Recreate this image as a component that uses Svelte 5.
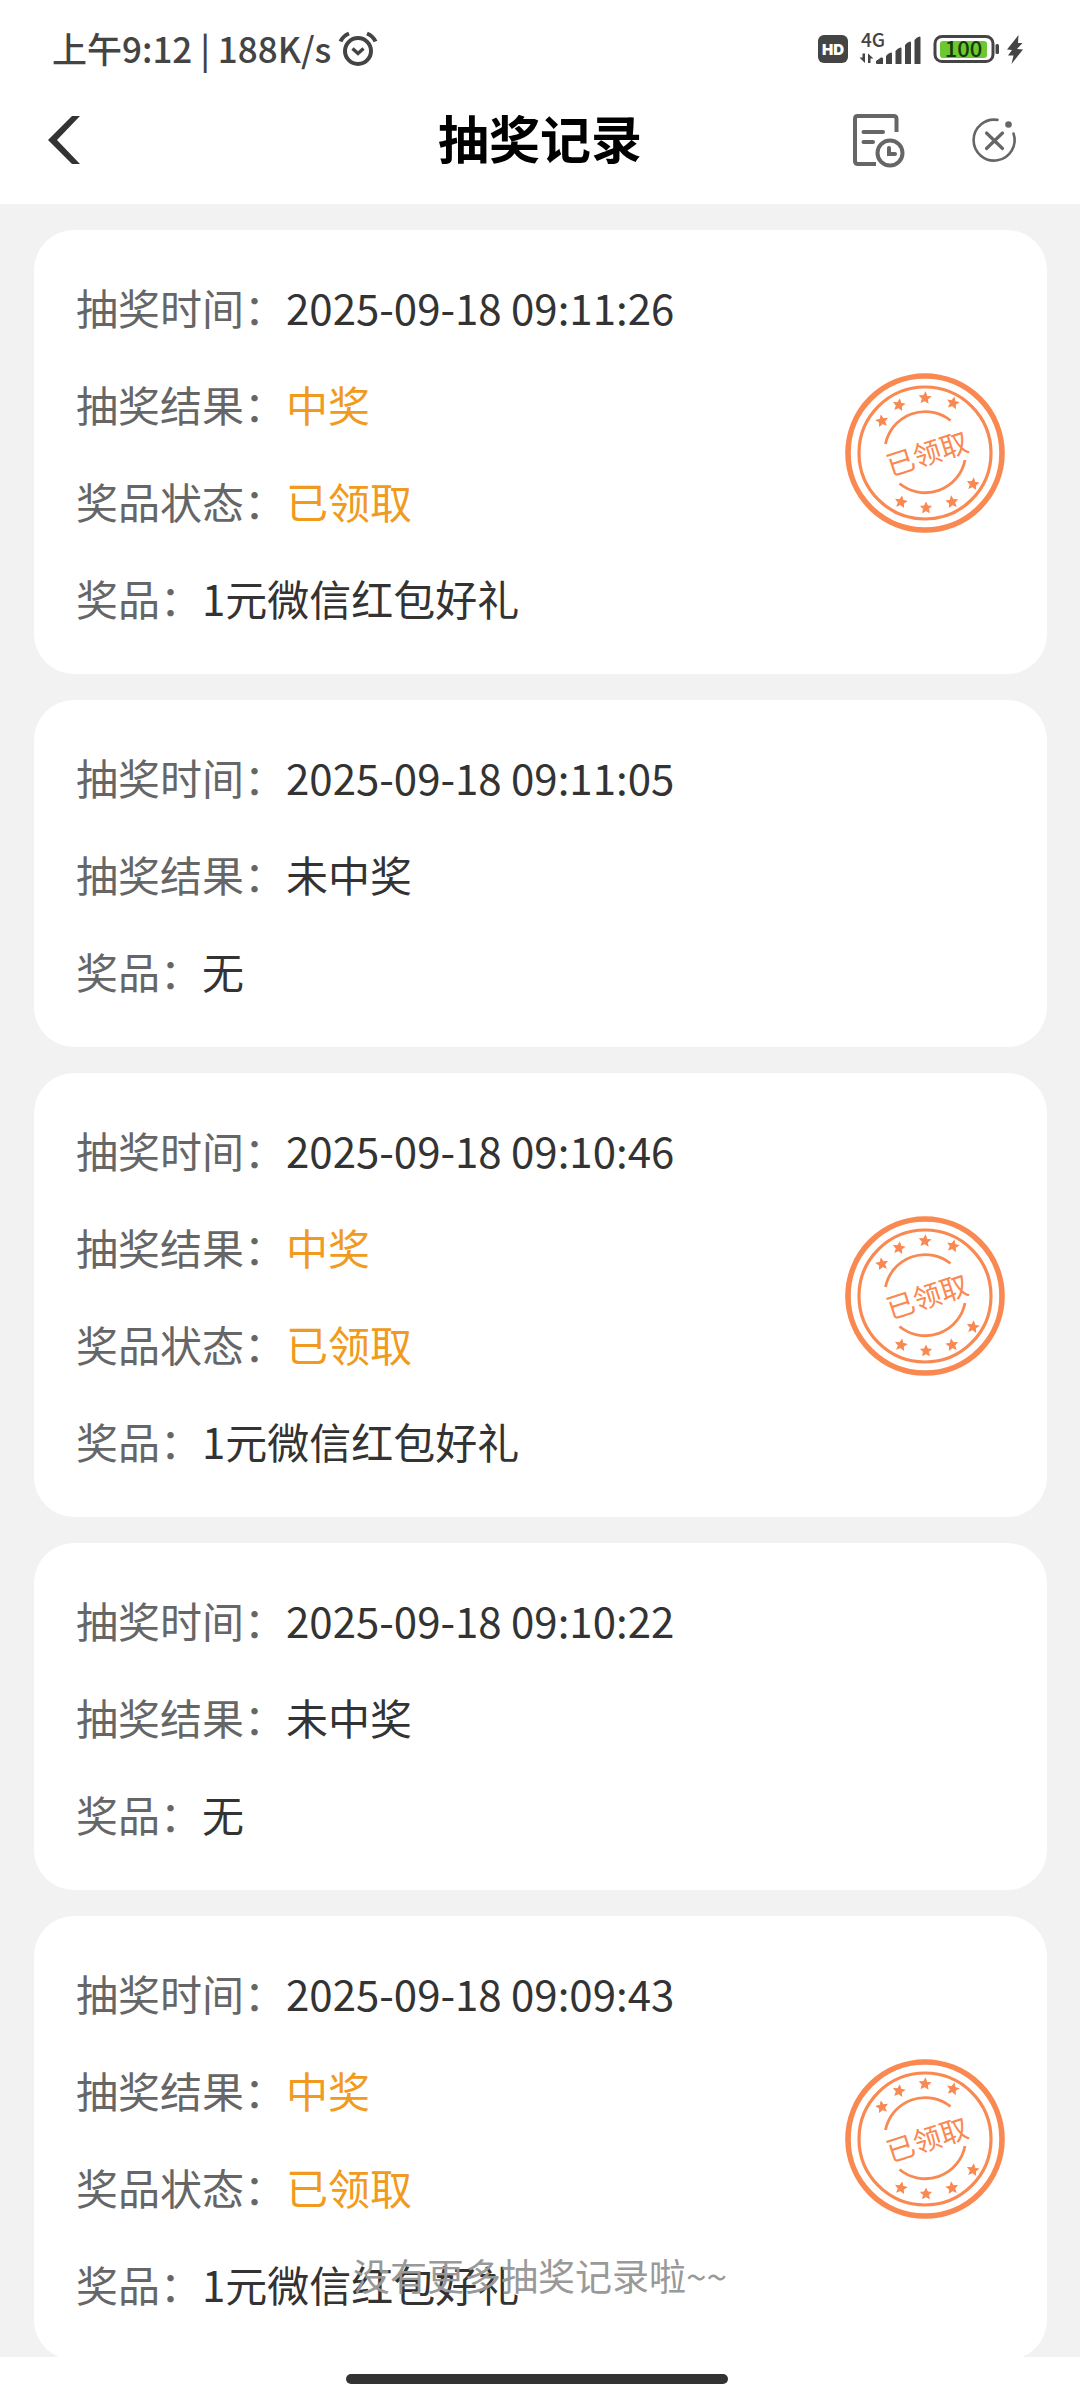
<script lang="ts">
  type Row = { label: string; value: string; tone?: 'accent' };
  type Draw = { claimed: boolean; rows: Row[] };

  function won(time: string): Draw {
    return {
      claimed: true,
      rows: [
        { label: '抽奖时间', value: time },
        { label: '抽奖结果', value: '中奖', tone: 'accent' },
        { label: '奖品状态', value: '已领取', tone: 'accent' },
        { label: '奖品', value: '1元微信红包好礼' },
      ],
    };
  }

  function lost(time: string): Draw {
    return {
      claimed: false,
      rows: [
        { label: '抽奖时间', value: time },
        { label: '抽奖结果', value: '未中奖' },
        { label: '奖品', value: '无' },
      ],
    };
  }

  const draws: Draw[] = [
    won('2025-09-18 09:11:26'),
    lost('2025-09-18 09:11:05'),
    won('2025-09-18 09:10:46'),
    lost('2025-09-18 09:10:22'),
    won('2025-09-18 09:09:43'),
  ];

  // Centre and tilt of each star on the stamp
  const stars = [
    [37, 49, -10], [54, 33, 8], [80, 26, 5], [108, 31, 12],
    [128, 112, 8], [107, 130, -8], [81, 136, 0], [56, 130, 10],
  ];
</script>

<div class="screen">
  <header>
    <div class="status">
      <div class="status-side">
        <span class="clock">上午9:12 | 188K/s</span>
        <svg width="38" height="36" viewBox="0 0 38 36" fill="none" stroke="#444" stroke-width="4" aria-hidden="true">
          <circle cx="19" cy="20" r="13" />
          <path d="M13.5 17.5l5.5 5 5.5-5" stroke-width="3.4" />
          <path d="M1.5 10.5Q4 5 10 2.500M36.500 10.500Q34 5 28 2.500" />
        </svg>
      </div>
      <div class="status-side status-icons">
        <svg width="30" height="30" viewBox="0 0 30 30" aria-label="HD">
          <rect x="0" y="1" width="30" height="28" rx="6" fill="#444" />
          <text x="15" y="20.500" text-anchor="middle" class="hd">HD</text>
        </svg>
        <svg width="62" height="34" viewBox="0 0 62 34" aria-label="4G">
          <text x="1" y="15" class="net">4G</text>
          <g fill="#444">
            <path d="M2.500 21.500h2.500v9.500l-5.500-5.500h3zM8 31V21.500l5.500 5h-3v4.500z" />
            <path d="M16 31v-2l5-3.500q2-.5 2 1V32h-6q-1 0-1-1zM26 24q2-3 5-3.500 1 0 1 1V32h-6zM35.500 19q2-3 5-3.500 1 0 1 1V32h-6zM45 13q2-3 5-3.500 1 0 1 1V32h-6zM54.500 8q2-3 5-3.500 1 0 1 1V32h-6z" />
          </g>
        </svg>
        <svg width="90" height="30" viewBox="0 0 90 30" aria-label="100%">
          <rect x="1" y="2.500" width="58" height="25" rx="7" fill="none" stroke="#444" stroke-width="3" />
          <rect x="6" y="7" width="47" height="17" rx="3" fill="#6bc831" />
          <text x="29.500" y="23" text-anchor="middle" class="charge">100</text>
          <rect x="61.500" y="10" width="3.500" height="10" rx="1.500" fill="#444" />
          <path d="M84.500 1L73 15.500l5 .5-4 5.500h5.500L77.500 30 89 15.500l-6-.5 5.500-6H84z" fill="#444" />
        </svg>
      </div>
    </div>
    <div class="bar">
      <button class="back" aria-label="返回">
        <svg width="32" height="50" viewBox="0 0 32 50" aria-hidden="true"><path d="M0 25L24 1h8L9 25l23 24h-8z" fill="#333" /></svg>
      </button>
      <h1>抽奖记录</h1>
      <div class="actions">
        <button aria-label="记录">
          <svg width="54" height="54" viewBox="0 0 54 54" fill="none" stroke="#666" stroke-width="4" stroke-linecap="round" aria-hidden="true">
            <path d="M44.500 19V6q0-3-3-3h-36Q3 3 3 6v42q0 3 3 3h18" stroke-linecap="butt" />
            <path d="M11.500 19H31M11.500 29H21" />
            <circle cx="38" cy="40" r="12.500" />
            <path d="M37 35v6h6" />
          </svg>
        </button>
        <button aria-label="关闭">
          <svg width="44" height="44" viewBox="0 0 44 44" fill="none" stroke="#666" stroke-width="2.600" stroke-linecap="round" aria-hidden="true">
            <path d="M25.500 1.900A20.500 20.500 0 1 0 41.500 15.500" />
            <path d="M14.500 15L30.500 30.500M30.500 15L14.500 30.500" stroke-width="3.200" />
            <circle cx="36.500" cy="6.500" r="3.300" fill="#666" stroke="none" />
          </svg>
        </button>
      </div>
    </div>
  </header>

  <main>
    {#each draws as draw}
      <article class="card">
        <dl>
          {#each draw.rows as row}
            <div class="row">
              <dt>{row.label}：</dt>
              <dd class:accent={row.tone === 'accent'}>{row.value}</dd>
            </div>
          {/each}
        </dl>
        {#if draw.claimed}
          <svg class="stamp" width="160" height="162" viewBox="0 -1 160 162" fill="none" stroke="#f98851" stroke-width="3.200" aria-label="已领取">
            <circle cx="80" cy="81" r="77" stroke-width="5.600" />
            <circle cx="80" cy="81" r="66" />
            <path d="M40.500 72A40.500 40.500 0 0 1 105.500 48.500M54.500 111.500A40.500 40.500 0 0 0 120 88" stroke-width="2.800" />
            {#each stars as [x, y, turn]}
              <path
                transform="translate({x} {y}) rotate({turn})"
                d="M0-5.500L1.600-2 5.300-1.700 2.500.8 3.300 4.500 0 2.600-3.300 4.500-2.500.8-5.300-1.700-1.600-2z"
                fill="#f98851"
                stroke-width="1"
              />
            {/each}
            <text x="82" y="92" text-anchor="middle" transform="rotate(-18 82 81)">已领取</text>
          </svg>
        {/if}
      </article>
    {/each}
  </main>

  <footer>
    <p class="end">没有更多抽奖记录啦~~</p>
    <div class="handle"></div>
  </footer>
</div>

<style>
  :global(body) {
    margin: 0;
  }
  .screen {
    display: flex;
    flex-direction: column;
    height: 100vh;
    background: #f2f2f2;
    color: #333;
    font-family: 'Noto Sans CJK SC', sans-serif;
  }
  svg {
    overflow: visible;
  }
  header {
    flex: none;
    padding-bottom: 22px;
    background: #fff;
  }
  .status {
    display: flex;
    align-items: center;
    justify-content: space-between;
    height: 98px;
    padding: 0 56px 0 52px;
    color: #444;
  }
  .status-side {
    display: flex;
    align-items: center;
    gap: 8px;
  }
  .status-icons {
    gap: 12px;
  }
  .clock {
    padding-bottom: 2px;
    font-size: 35px;
    font-weight: 500;
    line-height: 48px;
    white-space: nowrap;
  }
  .hd {
    fill: #fff;
    font: 900 15px Inter, sans-serif;
  }
  .net {
    fill: #444;
    font: 500 19px 'Noto Sans CJK SC', sans-serif;
  }
  .charge {
    fill: #173b06;
    font: 500 22px 'Noto Sans CJK SC', sans-serif;
  }
  .bar {
    display: grid;
    grid-template-columns: 1fr auto 1fr;
    align-items: center;
    height: 84px;
    padding: 0 48px;
  }
  button {
    display: flex;
    padding: 0;
    border: 0;
    background: none;
    cursor: pointer;
  }
  .back {
    justify-self: start;
  }
  h1 {
    margin: 0;
    padding-bottom: 6px;
    color: #000;
    font-size: 51px;
    font-weight: 700;
    line-height: 72px;
  }
  .actions {
    display: flex;
    align-items: center;
    justify-content: flex-end;
    gap: 66px;
    padding-right: 16px;
  }
  main {
    display: flex;
    flex: 1;
    flex-direction: column;
    gap: 26px;
    min-height: 0;
    padding: 26px 33px 0 34px;
    overflow-y: auto;
    scrollbar-width: none;
  }
  .card {
    display: flex;
    flex: none;
    align-items: center;
    justify-content: space-between;
    padding: 28px 42px;
    border-radius: 40px;
    background: #fff;
  }
  dl {
    margin: 0;
  }
  .row {
    display: flex;
    font-size: 42px;
    line-height: 97px;
  }
  dt {
    color: #666;
  }
  dd {
    margin: 0;
  }
  .accent {
    color: #f09a20;
  }
  .stamp {
    flex: none;
  }
  .stamp text {
    fill: #f98851;
    stroke: none;
    font-size: 28px;
  }
  footer {
    position: relative;
    display: flex;
    flex: none;
    justify-content: center;
    padding: 17px 6px 16px 0;
    background: #fff;
  }
  .end {
    position: absolute;
    right: 0;
    bottom: 100%;
    left: 0;
    margin: 0 0 54px;
    color: #999;
    font-size: 37px;
    line-height: 56px;
    text-align: center;
  }
  .handle {
    width: 35.5%;
    height: 10px;
    border-radius: 5px;
    background: #333;
  }
</style>
